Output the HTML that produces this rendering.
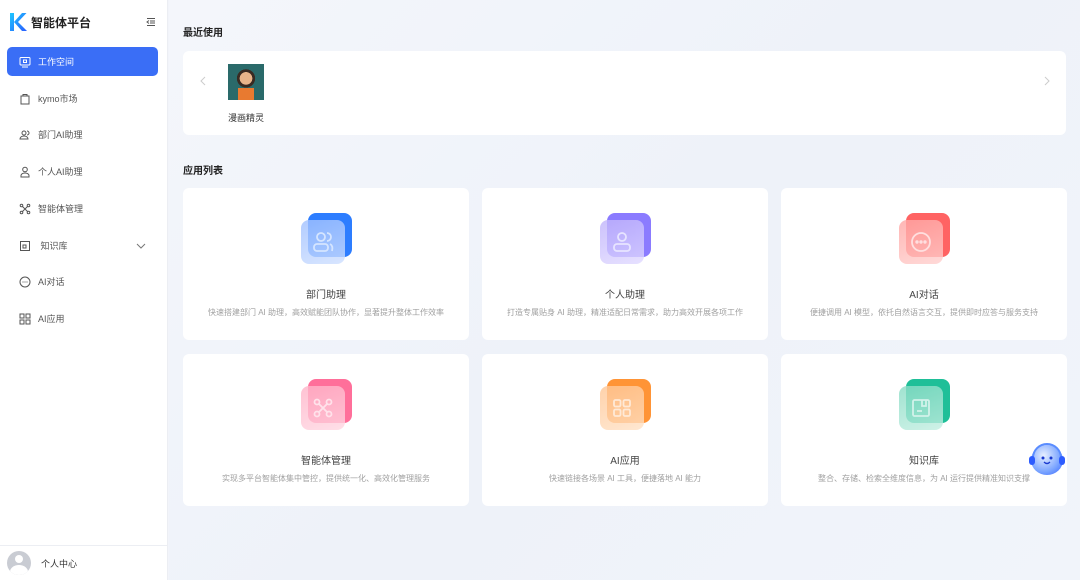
<!DOCTYPE html>
<html><head><meta charset="utf-8"><style>
*{box-sizing:border-box;margin:0;padding:0}
body{width:1080px;height:580px;overflow:hidden;font-family:"Liberation Sans","Noto Sans CJK SC",sans-serif;background:#f2f4fa;position:relative;color:#333}
.side{position:absolute;left:0;top:0;width:168px;height:580px;background:#fff;border-right:1px solid #eceef3}
.logo{position:absolute;left:9px;top:12px;display:flex;align-items:center;gap:4px;font-weight:bold;font-size:12px;color:#222}
.menu{position:absolute;left:7px;width:151px;height:29px;border-radius:5px;display:flex;align-items:center;padding-left:12px;font-size:9px;color:#555}
.menu svg{width:12px;height:12px;margin-right:7px}
.menu.act{background:#3a6ef6;color:#fff}
.user{position:absolute;left:0;bottom:0;width:168px;height:35px;border-top:1px solid #eceef3;display:flex;align-items:center;padding-left:7px;font-size:9px;color:#333}
.av{width:24px;height:24px;border-radius:50%;background:#c9ccd3;margin-right:10px;position:relative;overflow:hidden}
.main{position:absolute;left:169px;top:0;right:0;bottom:0;background:linear-gradient(135deg,#f4f6fb 0%,#eef2f9 50%,#f1f4fa 100%)}
h3{position:absolute;font-size:10px;font-weight:bold;color:#222}
.recent{position:absolute;left:183px;top:51px;width:883px;height:84px;background:#fff;border-radius:6px}
.card{position:absolute;width:286px;height:152px;background:#fff;border-radius:6px;text-align:center}
.ic{position:absolute;left:118px;top:25px;width:52px;height:52px}
.back{position:absolute;left:7px;top:0;width:44px;height:44px;border-radius:8px}
.front{position:absolute;left:0;top:7px;width:44px;height:44px;border-radius:8px;opacity:.8;display:flex;align-items:center;justify-content:center}
.t{position:absolute;top:98px;width:100%;font-size:10px;color:#444}
.d{position:absolute;top:119px;width:100%;font-size:8px;color:#a0a0a0}
</style></head><body>
<div class="side">
<div class="logo"><svg width="18" height="20" viewBox="0 0 18 20"><defs><linearGradient id="lg" x1="0" y1="0" x2="1" y2="1"><stop offset="0" stop-color="#1ec8ff"/><stop offset="1" stop-color="#2a5cff"/></linearGradient></defs><path d="M1 1h4v18H1zM5 10L13 1h4.5L9 10l9 9h-5z" fill="url(#lg)"/></svg>智能体平台</div>
<svg style="position:absolute;left:146px;top:17px" width="10" height="10" viewBox="0 0 10 10" stroke="#555" fill="none"><path d="M1 1.5h8M4 4h5M4 6h5M1 8.5h8M3 3.5L1 5l2 1.5"/></svg>
<div class="menu act" style="top:47px"><svg viewBox="0 0 12 12" fill="none" stroke="#fff"><rect x="1" y="1.5" width="10" height="7.5" rx="1"/><path d="M3 11h6"/><rect x="4.5" y="4" width="3" height="2.5"/></svg>工作空间</div>
<div class="menu" style="top:84px"><svg viewBox="0 0 12 12" fill="none" stroke="#555"><path d="M2 3h8v8H2zM4 3V1.5h4V3"/></svg>kymo市场</div>
<div class="menu" style="top:120px"><svg viewBox="0 0 12 12" fill="none" stroke="#555"><circle cx="5" cy="4" r="2"/><path d="M1 10c0-2 2-3 4-3s4 1 4 3zM8 2a2 2 0 010 4"/></svg>部门AI助理</div>
<div class="menu" style="top:157px"><svg viewBox="0 0 12 12" fill="none" stroke="#555"><circle cx="6" cy="3.5" r="2.3"/><path d="M2 11V9.5c0-1.5 2-2.5 4-2.5s4 1 4 2.5V11z"/></svg>个人AI助理</div>
<div class="menu" style="top:194px"><svg viewBox="0 0 12 12" fill="none" stroke="#555"><circle cx="2.5" cy="2.5" r="1.3"/><circle cx="9.5" cy="2.5" r="1.3"/><circle cx="2.5" cy="9.5" r="1.3"/><circle cx="9.5" cy="9.5" r="1.3"/><path d="M3.5 3.5l5 5M8.5 3.5l-5 5"/></svg>智能体管理</div>
<div class="menu" style="top:231px"><svg viewBox="0 0 12 12" fill="none" stroke="#555"><rect x="1.5" y="1.5" width="9" height="9"/><path d="M4 5h3v3H4z"/></svg>&nbsp;知识库<svg style="position:absolute;left:128px;margin:0" viewBox="0 0 12 12" fill="none" stroke="#777"><path d="M2 4l4 4 4-4"/></svg></div>
<div class="menu" style="top:267px"><svg viewBox="0 0 12 12" fill="none" stroke="#555"><circle cx="6" cy="6" r="5"/><path d="M3.5 6h1M5.5 6h1M7.5 6h1"/></svg>AI对话</div>
<div class="menu" style="top:304px"><svg viewBox="0 0 12 12" fill="none" stroke="#555"><rect x="1" y="1" width="4" height="4"/><rect x="7" y="1" width="4" height="4"/><rect x="1" y="7" width="4" height="4"/><rect x="7" y="7" width="4" height="4"/></svg>AI应用</div>
<div class="user"><div class="av"><div style="position:absolute;left:8px;top:4px;width:8px;height:8px;border-radius:50%;background:#fff"></div><div style="position:absolute;left:3px;top:14px;width:18px;height:14px;border-radius:50%;background:#fff"></div></div>个人中心</div>
</div>
<div class="main"></div>
<h3 style="left:183px;top:24px">最近使用</h3>
<div class="recent">
<svg style="position:absolute;left:16px;top:25px" width="8" height="10" viewBox="0 0 8 10" fill="none" stroke="#ccc"><path d="M6 1L2 5l4 4"/></svg>
<svg style="position:absolute;left:860px;top:25px" width="8" height="10" viewBox="0 0 8 10" fill="none" stroke="#ccc"><path d="M2 1l4 4-4 4"/></svg>
<div style="position:absolute;left:45px;top:13px;width:36px;height:36px;background:radial-gradient(circle at 50% 40%,#e8b48a 0 22%,#3a2a22 23% 32%,#2a6a6a 33%);"><div style="position:absolute;left:10px;top:24px;width:16px;height:12px;background:#e87a30"></div></div>
<div style="position:absolute;left:45px;top:60px;font-size:9px;color:#333">漫画精灵</div>
</div>
<h3 style="left:183px;top:162px">应用列表</h3>

<div class="card" style="left:183px;top:188px"><div class="ic"><div class="back" style="background:#2d7dff"></div><div class="front" style="background:linear-gradient(160deg,#9fc0ff,#cfe0ff)"><svg width="26" height="26" viewBox="0 0 26 26" fill="none" stroke="#fff" stroke-width="1.8"><circle cx="11" cy="8" r="4"/><rect x="4" y="15" width="14" height="7" rx="3"/><path d="M17 4a4 4 0 010 8M20 15c2 1 3 3 2 7"/></svg></div></div><div class="t">部门助理</div><div class="d">快速搭建部门 AI 助理，高效赋能团队协作，显著提升整体工作效率</div></div>
<div class="card" style="left:482px;top:188px"><div class="ic"><div class="back" style="background:#8b7bff"></div><div class="front" style="background:linear-gradient(160deg,#c0b3fc,#e0d9ff)"><svg width="26" height="26" viewBox="0 0 26 26" fill="none" stroke="#fff" stroke-width="1.8"><circle cx="13" cy="8" r="4"/><rect x="5" y="15" width="16" height="7" rx="3"/></svg></div></div><div class="t">个人助理</div><div class="d">打造专属贴身 AI 助理，精准适配日常需求，助力高效开展各项工作</div></div>
<div class="card" style="left:781px;top:188px"><div class="ic"><div class="back" style="background:#ff6363"></div><div class="front" style="background:linear-gradient(160deg,#ffa5a3,#ffd0ce)"><svg width="26" height="26" viewBox="0 0 26 26" fill="none" stroke="#fff" stroke-width="1.8"><circle cx="13" cy="13" r="9"/><circle cx="9" cy="13" r=".8" fill="#fff"/><circle cx="13" cy="13" r=".8" fill="#fff"/><circle cx="17" cy="13" r=".8" fill="#fff"/></svg></div></div><div class="t">AI对话</div><div class="d">便捷调用 AI 模型，依托自然语言交互，提供即时应答与服务支持</div></div>
<div class="card" style="left:183px;top:354px"><div class="ic"><div class="back" style="background:#ff6f9a"></div><div class="front" style="background:linear-gradient(160deg,#ffb3c8,#ffd8e3)"><svg width="26" height="26" viewBox="0 0 26 26" fill="none" stroke="#fff" stroke-width="1.8"><circle cx="7" cy="7" r="2.5"/><circle cx="19" cy="7" r="2.5"/><circle cx="7" cy="19" r="2.5"/><circle cx="19" cy="19" r="2.5"/><path d="M9 9l8 8M17 9l-8 8"/></svg></div></div><div class="t">智能体管理</div><div class="d">实现多平台智能体集中管控，提供统一化、高效化管理服务</div></div>
<div class="card" style="left:482px;top:354px"><div class="ic"><div class="back" style="background:#ff9436"></div><div class="front" style="background:linear-gradient(160deg,#ffc796,#ffe2c6)"><svg width="26" height="26" viewBox="0 0 26 26" fill="none" stroke="#fff" stroke-width="1.8"><rect x="5" y="5" width="6.5" height="6.5" rx="1.5"/><rect x="14.5" y="5" width="6.5" height="6.5" rx="1.5"/><rect x="5" y="14.5" width="6.5" height="6.5" rx="1.5"/><rect x="14.5" y="14.5" width="6.5" height="6.5" rx="1.5"/></svg></div></div><div class="t">AI应用</div><div class="d">快速链接各场景 AI 工具，便捷落地 AI 能力</div></div>
<div class="card" style="left:781px;top:354px"><div class="ic"><div class="back" style="background:#1fbf98"></div><div class="front" style="background:linear-gradient(160deg,#88dcc5,#c4efe2)"><svg width="26" height="26" viewBox="0 0 26 26" fill="none" stroke="#fff" stroke-width="1.8"><rect x="5" y="5" width="16" height="16" rx="1.5"/><path d="M14 5v6h4V5M9 16h5"/></svg></div></div><div class="t">知识库</div><div class="d">整合、存储、检索全维度信息，为 AI 运行提供精准知识支撑</div></div>

<div style="position:absolute;left:1031px;top:445px;width:32px;height:30px;border-radius:50%;background:radial-gradient(circle at 40% 35%,#e8f0ff,#7aa4ff 60%,#3060ff)"></div>
<svg style="position:absolute;left:1028px;top:442px" width="38" height="34" viewBox="0 0 38 34" fill="none"><path d="M5 16a14 14 0 0128 0" stroke="#5a8cff" stroke-width="2"/><rect x="1" y="14" width="6" height="9" rx="3" fill="#2d5cff"/><rect x="31" y="14" width="6" height="9" rx="3" fill="#2d5cff"/><circle cx="15" cy="16" r="1.5" fill="#1a3ad0"/><circle cx="23" cy="16" r="1.5" fill="#1a3ad0"/><path d="M16 20q3 3 6 0" stroke="#1a3ad0" stroke-width="1.3"/></svg>
</body></html>
